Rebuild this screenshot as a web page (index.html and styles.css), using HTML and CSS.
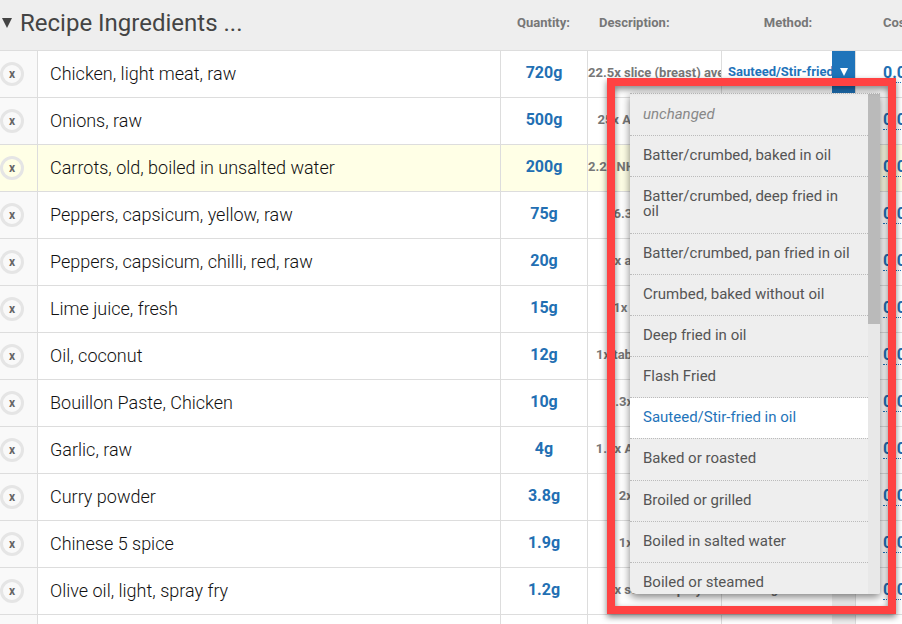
FILE: index.html
```html
<!DOCTYPE html>
<html lang="en">
<head>
  <meta charset="utf-8">
  <title>Recipe Ingredients</title>
  <link rel="stylesheet" href="styles.css">
</head>
<body>
  <table class="ingredients">
    <colgroup>
      <col class="col-remove">
      <col>
      <col class="col-quantity">
      <col class="col-description">
      <col class="col-method">
      <col class="col-cost">
    </colgroup>
    <thead>
      <tr>
        <th class="title" colspan="2">
          <button class="toggle" type="button" aria-expanded="true">
            <svg width="10" height="10" viewBox="0 0 10 10"><path d="M0 0h10L5 10z" fill="#444"/></svg>
            Recipe Ingredients ...
          </button>
        </th>
        <th>Quantity:</th>
        <th class="description-head">Description:</th>
        <th>Method:</th>
        <th class="cost-head">Cost:</th>
      </tr>
    </thead>
    <tbody>
      <tr>
        <td class="remove"><button type="button" aria-label="Remove chicken">x</button></td>
        <td class="name">Chicken, light meat, raw</td>
        <td class="quantity">720g</td>
        <td class="description long">22.5x slice (breast) average</td>
        <td class="method open">
          <div class="method-box">
            <span>Sauteed/Stir-fried in oil</span>
            <button class="arrow" type="button" aria-haspopup="listbox" aria-expanded="true" aria-label="Method">
              <svg width="8" height="8" viewBox="0 0 8 8"><path d="M0 0h8L4 8z" fill="#fff"/></svg>
            </button>
          </div>
          <div class="menu">
            <ul class="menu-list">
              <li><button type="button" class="unchanged">unchanged</button></li>
              <li><button type="button">Batter/crumbed, baked in oil</button></li>
              <li><button type="button">Batter/crumbed, deep fried in oil</button></li>
              <li><button type="button">Batter/crumbed, pan fried in oil</button></li>
              <li><button type="button">Crumbed, baked without oil</button></li>
              <li><button type="button">Deep fried in oil</button></li>
              <li><button type="button">Flash Fried</button></li>
              <li><button type="button" class="selected">Sauteed/Stir-fried in oil</button></li>
              <li><button type="button">Baked or roasted</button></li>
              <li><button type="button">Broiled or grilled</button></li>
              <li><button type="button">Boiled in salted water</button></li>
              <li><button type="button">Boiled or steamed</button></li>
            </ul>
            <div class="scrollbar"><div class="thumb"></div></div>
          </div>
          <div class="highlight"></div>
        </td>
        <td class="cost"><a href="#">0.00</a></td>
      </tr>
      <tr>
        <td class="remove"><button type="button" aria-label="Remove onions">x</button></td>
        <td class="name">Onions, raw</td>
        <td class="quantity">500g</td>
        <td class="description">25x Average pieces</td>
        <td class="method"><div class="method-box"><span>unchanged</span><button class="arrow" type="button" aria-label="Method"></button></div></td>
        <td class="cost"><a href="#">0.00</a></td>
      </tr>
      <tr class="marked">
        <td class="remove"><button type="button" aria-label="Remove carrots">x</button></td>
        <td class="name">Carrots, old, boiled in unsalted water</td>
        <td class="quantity">200g</td>
        <td class="description long">2.2x NHS portion average</td>
        <td class="method"><div class="method-box"><span>unchanged</span><button class="arrow" type="button" aria-label="Method"></button></div></td>
        <td class="cost"><a href="#">0.00</a></td>
      </tr>
      <tr>
        <td class="remove"><button type="button" aria-label="Remove yellow peppers">x</button></td>
        <td class="name">Peppers, capsicum, yellow, raw</td>
        <td class="quantity">75g</td>
        <td class="description">6.3x ring slice</td>
        <td class="method"><div class="method-box"><span>unchanged</span><button class="arrow" type="button" aria-label="Method"></button></div></td>
        <td class="cost"><a href="#">0.00</a></td>
      </tr>
      <tr>
        <td class="remove"><button type="button" aria-label="Remove chilli peppers">x</button></td>
        <td class="name">Peppers, capsicum, chilli, red, raw</td>
        <td class="quantity">20g</td>
        <td class="description">1x average chilli</td>
        <td class="method"><div class="method-box"><span>unchanged</span><button class="arrow" type="button" aria-label="Method"></button></div></td>
        <td class="cost"><a href="#">0.00</a></td>
      </tr>
      <tr>
        <td class="remove"><button type="button" aria-label="Remove lime juice">x</button></td>
        <td class="name">Lime juice, fresh</td>
        <td class="quantity">15g</td>
        <td class="description">1x tablespoon</td>
        <td class="method"><div class="method-box"><span>unchanged</span><button class="arrow" type="button" aria-label="Method"></button></div></td>
        <td class="cost"><a href="#">0.00</a></td>
      </tr>
      <tr>
        <td class="remove"><button type="button" aria-label="Remove coconut oil">x</button></td>
        <td class="name">Oil, coconut</td>
        <td class="quantity">12g</td>
        <td class="description">1x tablespoon (15g)</td>
        <td class="method"><div class="method-box"><span>unchanged</span><button class="arrow" type="button" aria-label="Method"></button></div></td>
        <td class="cost"><a href="#">0.00</a></td>
      </tr>
      <tr>
        <td class="remove"><button type="button" aria-label="Remove bouillon paste">x</button></td>
        <td class="name">Bouillon Paste, Chicken</td>
        <td class="quantity">10g</td>
        <td class="description">0.3x tablespoon</td>
        <td class="method"><div class="method-box"><span>unchanged</span><button class="arrow" type="button" aria-label="Method"></button></div></td>
        <td class="cost"><a href="#">0.00</a></td>
      </tr>
      <tr>
        <td class="remove"><button type="button" aria-label="Remove garlic">x</button></td>
        <td class="name">Garlic, raw</td>
        <td class="quantity">4g</td>
        <td class="description">1.3x Average cloves</td>
        <td class="method"><div class="method-box"><span>unchanged</span><button class="arrow" type="button" aria-label="Method"></button></div></td>
        <td class="cost"><a href="#">0.00</a></td>
      </tr>
      <tr>
        <td class="remove"><button type="button" aria-label="Remove curry powder">x</button></td>
        <td class="name">Curry powder</td>
        <td class="quantity">3.8g</td>
        <td class="description">2x teaspoon</td>
        <td class="method"><div class="method-box"><span>unchanged</span><button class="arrow" type="button" aria-label="Method"></button></div></td>
        <td class="cost"><a href="#">0.00</a></td>
      </tr>
      <tr>
        <td class="remove"><button type="button" aria-label="Remove Chinese 5 spice">x</button></td>
        <td class="name">Chinese 5 spice</td>
        <td class="quantity">1.9g</td>
        <td class="description">1x teaspoon</td>
        <td class="method"><div class="method-box"><span>unchanged</span><button class="arrow" type="button" aria-label="Method"></button></div></td>
        <td class="cost"><a href="#">0.00</a></td>
      </tr>
      <tr>
        <td class="remove"><button type="button" aria-label="Remove olive oil">x</button></td>
        <td class="name">Olive oil, light, spray fry</td>
        <td class="quantity">1.2g</td>
        <td class="description">1x second spray</td>
        <td class="method"><div class="method-box"><span>unchanged</span><button class="arrow" type="button" aria-label="Method"></button></div></td>
        <td class="cost"><a href="#">0.00</a></td>
      </tr>
      <tr>
        <td class="remove"></td>
        <td class="name"></td>
        <td class="quantity"></td>
        <td class="description"></td>
        <td class="method"><div class="method-box"><span></span><button class="arrow" type="button" aria-label="Method"></button></div></td>
        <td class="cost"></td>
      </tr>
    </tbody>
  </table>
</body>
</html>
```

FILE: styles.css
```css
* {
  box-sizing: border-box;
}

body {
  margin: 0;
  overflow: hidden;
  background: #fff;
  color: #111;
  font-family: Roboto, Arial, sans-serif;
}

button {
  margin: 0;
  padding: 0;
  border: none;
  background: none;
  font-family: inherit;
  cursor: pointer;
}

/* the cost column runs past the right edge of the window */
.ingredients {
  width: calc(100% + 40px);
  table-layout: fixed;
  border-collapse: separate;
  border-spacing: 0;
}

.col-remove {
  width: 38px;
}

.col-quantity {
  width: 87px;
}

.col-description,
.col-method {
  width: 134px;
}

.col-cost {
  width: 86px;
}

th {
  height: 51px;
  padding: 0 2px 5px 0;
  border-bottom: 1px solid #ddd;
  background: #eee;
  color: #777;
  font-size: 13px;
  font-weight: bold;
  text-align: center;
}

th.title,
th.description-head,
th.cost-head {
  text-align: left;
}

th.description-head {
  padding-left: 11px;
}

th.cost-head {
  padding-left: 27px;
}

.toggle {
  display: flex;
  align-items: center;
  gap: 8px;
  padding-left: 2px;
  color: #444;
  font-size: 24px;
  line-height: 28px;
}

td {
  height: 47px;
  padding: 0;
  border-right: 1px solid #ddd;
  border-bottom: 1px solid #ddd;
}

.remove {
  padding-bottom: 1px;
  background: #f9f9f9;
}

.remove button {
  display: block;
  width: 24px;
  height: 24px;
  border: 3px solid #e5e5e5;
  border-radius: 50%;
  color: #666;
  font-size: 12px;
  font-weight: bold;
  line-height: 16px;
}

.name {
  padding: 0 0 2px 12px;
  font-size: 18px;
  font-weight: 300;
}

.quantity {
  padding-bottom: 3px;
  color: #226fb3;
  font-size: 16px;
  font-weight: bold;
  text-align: center;
}

.description {
  padding-bottom: 4px;
  overflow: hidden;
  color: #777;
  font-size: 13px;
  font-weight: bold;
  text-align: center;
  white-space: nowrap;
}

.description.long {
  text-align: left;
}

.marked td {
  background: #ffffe6;
}

.method {
  position: relative;
}

.method-box {
  display: flex;
  height: 46px;
  color: #777;
  font-size: 13px;
  font-weight: bold;
  line-height: 42px;
}

.method-box span {
  flex: 1;
  overflow: hidden;
  padding-left: 6px;
  white-space: nowrap;
}

.arrow {
  display: flex;
  align-items: center;
  justify-content: center;
  width: 23px;
  background: #eee;
}

.open .method-box {
  color: #1f74ba;
}

.open .arrow {
  padding-bottom: 4px;
  background: #1f74ba;
}

.cost {
  padding: 0 0 3px 27px;
  font-size: 16px;
  font-weight: bold;
}

.cost a {
  border-bottom: 1px dotted #1f74ba;
  color: #226fb3;
  text-decoration: none;
}

/* Method menu */

.menu {
  position: absolute;
  z-index: 2;
  top: 42px;
  right: -25px;
  display: flex;
  width: 250px;
  height: 501px;
  overflow: hidden;
  border-top: 1px dotted #bbb;
  border-radius: 0 0 2px 6px;
  background: #eee;
  box-shadow: 0 3px 8px rgba(0, 0, 0, 0.5);
}

.menu-list {
  display: flex;
  flex: 1;
  flex-direction: column;
  min-height: 510px;
  margin: 0;
  padding: 1px 0 0;
  list-style: none;
}

.menu-list li {
  display: flex;
  flex: 1 0 auto;
  border-bottom: 1px dotted #bbb;
}

.menu-list button {
  width: 100%;
  padding: 12px 13px 13px;
  color: #555;
  font-size: 15px;
  line-height: 15px;
  text-align: left;
}

.menu-list .unchanged {
  color: #888;
  font-style: italic;
}

.menu-list .selected {
  background: #fff;
  color: #1f74ba;
}

.scrollbar {
  width: 12px;
  background: #e8e8e8;
}

.thumb {
  height: 230px;
  background: #bababa;
}

/* Red frame round the open menu */

.highlight {
  position: absolute;
  z-index: 3;
  top: 27px;
  right: -41px;
  width: 289px;
  height: 536px;
  border: 8px solid #ff4242;
  filter: drop-shadow(0 3px 3px rgba(0, 0, 0, 0.5));
  pointer-events: none;
}
```
